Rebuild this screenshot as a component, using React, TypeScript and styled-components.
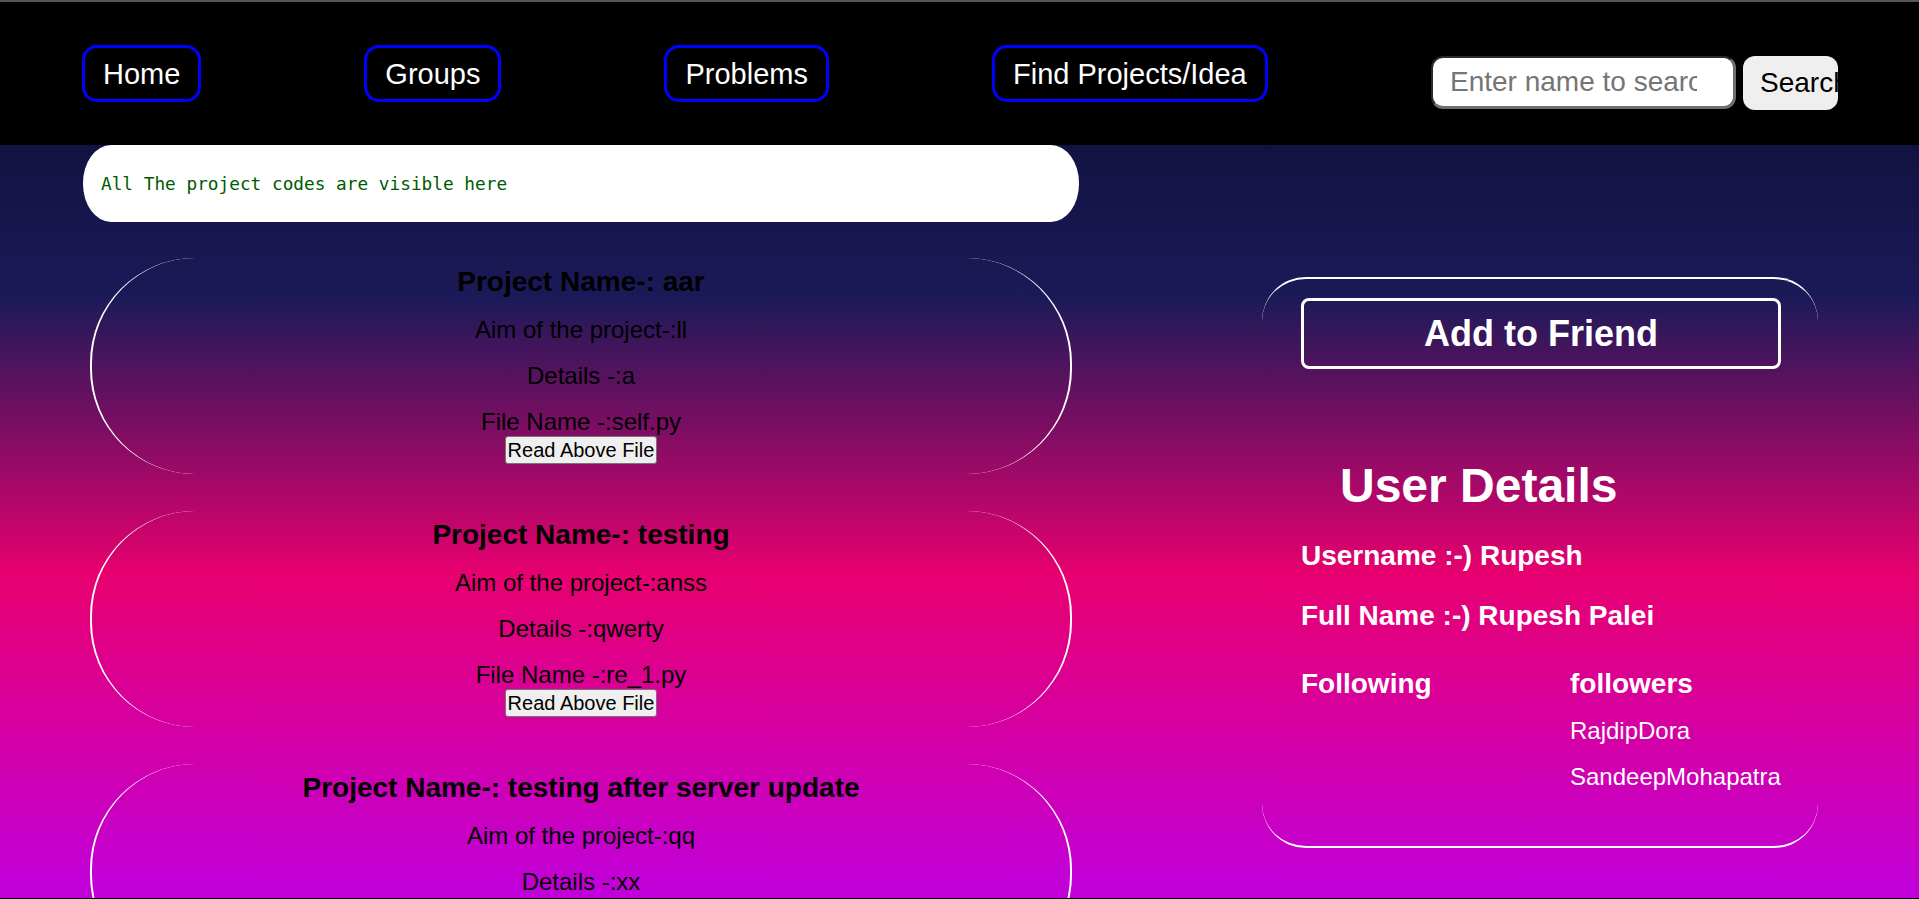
import React from "react";
import styled, { createGlobalStyle } from "styled-components";

const GlobalStyle = createGlobalStyle`
  * { box-sizing: border-box; }
  html, body {
    margin: 0;
    padding: 0;
    height: 100%;
    overflow: hidden;
    background: #000;
  }
  body {
    font-family: "Liberation Sans", Arial, sans-serif;
  }
`;

const Page = styled.div`
  height: 100vh;
  display: flex;
  flex-direction: column;
  overflow: hidden;
  border-bottom: 1px solid #000;
`;

const Header = styled.header`
  flex: 0 0 145px;
  background: #000;
  border-top: 2px solid #565656;
  display: flex;
  align-items: flex-start;
  padding: 0 81px 0 82px;
`;

const Nav = styled.nav`
  display: flex;
  gap: 163px;
  margin-top: 43px;
`;

const NavLink = styled.a`
  display: flex;
  align-items: center;
  height: 57px;
  padding: 0 18px;
  border: 3px solid #0000ff;
  border-radius: 15px;
  color: #fff;
  font-size: 29px;
  line-height: 32px;
  text-decoration: none;
  white-space: nowrap;
`;

const SearchForm = styled.form`
  margin-left: auto;
  margin-top: 54px;
  display: flex;
  align-items: flex-start;
  gap: 7px;
`;

const SearchInput = styled.input`
  width: 305px;
  height: 53px;
  padding: 0 36px 0 17px;
  border-style: solid;
  border-width: 2px 3px 3px 2px;
  border-color: #2b2b2b #6e6e6e #6e6e6e #2b2b2b;
  border-radius: 12px;
  background: #fff;
  font-family: "Liberation Sans", Arial, sans-serif;
  font-size: 28px;
  color: #000;
  outline: none;
  &::placeholder {
    color: #757575;
  }
`;

const SearchButton = styled.button`
  width: 95px;
  height: 54px;
  padding: 0 0 0 17px;
  border: 0;
  border-radius: 12px;
  background: #efefef;
  color: #000;
  font-family: "Liberation Sans", Arial, sans-serif;
  font-size: 28px;
  text-align: left;
  white-space: nowrap;
  overflow: hidden;
`;

const Main = styled.main`
  flex: 1;
  min-height: 0;
  display: flex;
  align-items: flex-start;
  gap: 183px;
  padding-left: 83px;
  overflow: hidden;
  background: linear-gradient(
    180deg,
    #121242 0%,
    #1b1a58 20%,
    #e8006f 57%,
    #c000dc 100%
  );
`;

const LeftColumn = styled.section`
  width: 996px;
  flex: 0 0 996px;
`;

const Ribbon = styled.div`
  height: 77px;
  display: flex;
  align-items: center;
  padding-left: 18px;
  background: #fff;
  border-radius: 28px / 38px;
  font-family: "DejaVu Sans Mono", "Liberation Mono", monospace;
  font-size: 17.75px;
  color: #005a00;
  white-space: nowrap;
`;

const CardList = styled.div`
  display: flex;
  flex-direction: column;
  gap: 37px;
  margin-top: 36px;
  padding: 0 7px;
`;

const Card = styled.article`
  display: flex;
  flex-direction: column;
  align-items: center;
  padding: 8px 0 10px;
  border-left: 2px solid #fff;
  border-right: 2px solid #fff;
  border-top: 0;
  border-bottom: 0;
  border-radius: 105px;
  color: #000;
  text-align: center;
`;

const CardTitle = styled.h3`
  margin: 0;
  font-size: 28px;
  line-height: 32px;
  font-weight: 700;
`;

const CardLine = styled.p`
  margin: 18px 0 0;
  font-size: 24px;
  line-height: 28px;
`;

const ReadButton = styled.button`
  height: 28px;
  padding: 0 2px;
  border: 1px solid #767676;
  border-radius: 3px;
  background: #efefef;
  color: #000;
  font-family: "Liberation Sans", Arial, sans-serif;
  font-size: 20px;
  line-height: 24px;
`;

const Panel = styled.aside`
  width: 556px;
  flex: 0 0 556px;
  margin-top: 132px;
  padding: 19px 37px 55px 39px;
  border-top: 2px solid #fff;
  border-bottom: 2px solid #fff;
  border-left: 0;
  border-right: 0;
  border-radius: 44px;
  color: #fff;
`;

const FriendButton = styled.button`
  width: 100%;
  height: 71px;
  border: 3px solid #fff;
  border-radius: 8px;
  background: transparent;
  color: #fff;
  font-family: "Liberation Sans", Arial, sans-serif;
  font-size: 36px;
  font-weight: 700;
`;

const PanelTitle = styled.h1`
  margin: 89px 0 0 39px;
  font-size: 48px;
  line-height: 56px;
  font-weight: 700;
`;

const InfoRow = styled.h3<{ $gap: number }>`
  margin: ${(p) => p.$gap}px 0 0;
  font-size: 28px;
  line-height: 32px;
  font-weight: 700;
`;

const FollowGrid = styled.div`
  display: grid;
  grid-template-columns: 269px 1fr;
  margin-top: 36px;
`;

const FollowColumn = styled.div`
  display: flex;
  flex-direction: column;
`;

const FollowHeading = styled.h3`
  margin: 0;
  font-size: 28px;
  line-height: 32px;
  font-weight: 700;
`;

const FollowName = styled.p<{ $first?: boolean }>`
  margin: ${(p) => (p.$first ? 17 : 18)}px 0 0;
  font-size: 24px;
  line-height: 28px;
`;

type Project = { name: string; aim: string; details: string; file: string };

const projects: Project[] = [
  { name: "aar", aim: "ll", details: "a", file: "self.py" },
  { name: "testing", aim: "anss", details: "qwerty", file: "re_1.py" },
  { name: "testing after server update", aim: "qq", details: "xx", file: "update.py" },
];

const followers = ["RajdipDora", "SandeepMohapatra"];
const following: string[] = [];

export default function App() {
  return (
    <>
      <GlobalStyle />
      <Page>
        <Header>
          <Nav>
            <NavLink href="#">Home</NavLink>
            <NavLink href="#">Groups</NavLink>
            <NavLink href="#">Problems</NavLink>
            <NavLink href="#">Find Projects/Idea</NavLink>
          </Nav>
          <SearchForm onSubmit={(e) => e.preventDefault()}>
            <SearchInput placeholder="Enter name to search" />
            <SearchButton type="submit">Search</SearchButton>
          </SearchForm>
        </Header>
        <Main>
          <LeftColumn>
            <Ribbon>All The project codes are visible here</Ribbon>
            <CardList>
              {projects.map((p) => (
                <Card key={p.name}>
                  <CardTitle>Project Name-: {p.name}</CardTitle>
                  <CardLine>Aim of the project-:{p.aim}</CardLine>
                  <CardLine>Details -:{p.details}</CardLine>
                  <CardLine>File Name -:{p.file}</CardLine>
                  <ReadButton type="button">Read Above File</ReadButton>
                </Card>
              ))}
            </CardList>
          </LeftColumn>
          <Panel>
            <FriendButton type="button">Add to Friend</FriendButton>
            <PanelTitle>User Details</PanelTitle>
            <InfoRow $gap={26}>Username :-) Rupesh</InfoRow>
            <InfoRow $gap={28}>Full Name :-) Rupesh Palei</InfoRow>
            <FollowGrid>
              <FollowColumn>
                <FollowHeading>Following</FollowHeading>
                {following.map((n, i) => (
                  <FollowName key={n} $first={i === 0}>
                    {n}
                  </FollowName>
                ))}
              </FollowColumn>
              <FollowColumn>
                <FollowHeading>followers</FollowHeading>
                {followers.map((n, i) => (
                  <FollowName key={n} $first={i === 0}>
                    {n}
                  </FollowName>
                ))}
              </FollowColumn>
            </FollowGrid>
          </Panel>
        </Main>
      </Page>
    </>
  );
}
